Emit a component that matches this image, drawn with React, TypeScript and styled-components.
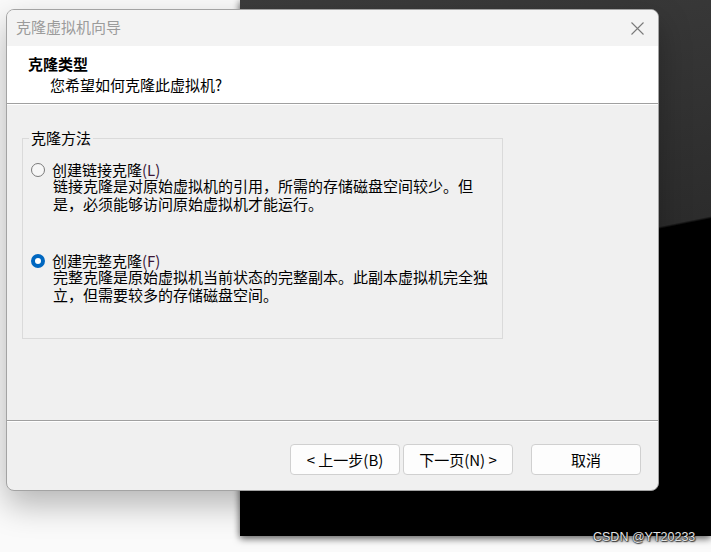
import React from "react";
import styled, { createGlobalStyle } from "styled-components";

const GlobalStyle = createGlobalStyle`
  html, body {
    margin: 0;
    padding: 0;
    background: #ffffff;
    overflow: hidden;
  }
  body {
    font-family: "Noto Sans CJK SC", "Noto Sans", sans-serif;
    font-size: 15px;
    color: #000;
  }
`;

const Desktop = styled.div`
  position: relative;
  width: 711px;
  height: 552px;
  background: #fafafa;
  overflow: hidden;
`;

const BackWindow = styled.div`
  position: absolute;
  left: 240px;
  top: 0;
  width: 471px;
  height: 536px;
  background: linear-gradient(
    168.6deg,
    #3c3c3c 0%,
    #2c2c2c 49.3%,
    #000000 49.7%,
    #000000 100%
  );
  box-shadow: 0 3px 7px rgba(0, 0, 0, 0.55), -2px 0 6px rgba(0, 0, 0, 0.12);
`;

const Dialog = styled.div`
  position: absolute;
  left: 6px;
  top: 9px;
  width: 653px;
  height: 482px;
  box-sizing: border-box;
  border: 1px solid #a3a3a3;
  border-radius: 8px;
  overflow: hidden;
  display: flex;
  flex-direction: column;
  background: #f0f0f0;
  box-shadow: 0 14px 32px rgba(0, 0, 0, 0.28);
`;

const TitleBar = styled.div`
  height: 36px;
  flex: none;
  box-sizing: border-box;
  display: flex;
  align-items: center;
  justify-content: space-between;
  padding: 0 14px 3px 9px;
  background: #f3f3f3;
`;

const TitleText = styled.span`
  color: #9b9b9b;
  font-size: 15px;
  line-height: 18px;
`;

const CloseButton = styled.span`
  width: 14px;
  height: 14px;
  display: flex;
  align-items: center;
  justify-content: center;
  margin-top: 3px;
`;

const Header = styled.div`
  height: 58px;
  flex: none;
  background: #ffffff;
  box-sizing: border-box;
  padding: 8px 0 0 21px;
  border-bottom: 1px solid #a0a0a0;
  box-shadow: 0 1px 0 #ffffff;
`;

const HeaderTitle = styled.div`
  font-weight: 700;
  font-size: 15px;
  line-height: 20px;
`;

const HeaderSub = styled.div`
  font-size: 15px;
  line-height: 20px;
  padding-left: 22px;
  margin-top: 1px;
`;

const Body = styled.div`
  flex: 1;
  padding: 24px 0 0 15px;
  margin-top: 1px;
`;

const GroupBox = styled.fieldset`
  width: 481px;
  height: 210px;
  box-sizing: border-box;
  margin: 0;
  padding: 0;
  border: 1px solid #dadada;
  border-radius: 0;
`;

const GroupLegend = styled.legend`
  margin-left: 6px;
  padding: 0 2px;
  font-size: 15px;
  line-height: 18px;
`;

const OptionList = styled.div`
  display: flex;
  flex-direction: column;
  gap: 39px;
  padding: 14px 0 0 8px;
`;

const Option = styled.div`
  display: grid;
  grid-template-columns: 14px auto;
  column-gap: 7px;
  align-items: center;
`;

const RadioCircle = styled.span<{ $checked?: boolean }>`
  width: 14px;
  height: 14px;
  box-sizing: border-box;
  border-radius: 50%;
  border: ${(p) => (p.$checked ? "4px solid #0067c0" : "1px solid #7a7a7a")};
  background: ${(p) => (p.$checked ? "#ffffff" : "#f6f6f6")};
`;

const OptionLabel = styled.span`
  font-size: 15px;
  line-height: 18px;
`;

const Mnemonic = styled.span`
  color: #3a1838;
`;

const OptionDesc = styled.div`
  grid-column: 2;
  width: 440px;
  margin-left: 1px;
  margin-top: -2px;
  font-size: 15px;
  line-height: 18px;
  line-break: strict;
`;

const Footer = styled.div`
  height: 70px;
  flex: none;
  box-sizing: border-box;
  border-top: 1px solid #a0a0a0;
  box-shadow: inset 0 1px 0 #ffffff;
  display: flex;
  justify-content: flex-end;
  align-items: flex-start;
  padding: 23px 17px 0 0;
`;

const ButtonGroup = styled.div`
  display: flex;
  gap: 3px;
  margin-right: 18px;
`;

const Button = styled.button`
  width: 110px;
  height: 31px;
  box-sizing: border-box;
  border: 1px solid #d0d0d0;
  border-radius: 4px;
  background: #fdfdfd;
  font-family: "Noto Sans CJK SC", "Noto Sans", sans-serif;
  font-size: 15px;
  line-height: 18px;
  color: #000;
  padding: 0;
`;

const Watermark = styled.span`
  position: absolute;
  left: 593px;
  top: 530px;
  font-family: "Liberation Sans", Arial, sans-serif;
  font-size: 12.5px;
  line-height: 15px;
  color: #e4e4e4;
  text-shadow: 0 0 1px #000, 0 0 2px #000, 1px 1px 1px rgba(0, 0, 0, 0.6);
`;

const CloseIcon = () => (
  <svg width="13" height="13" viewBox="0 0 13 13">
    <path d="M0.5 0.5 L12.5 12.5 M12.5 0.5 L0.5 12.5" stroke="#7a7a7a" strokeWidth="1.1" fill="none" />
  </svg>
);

export default function App() {
  return (
    <>
      <GlobalStyle />
      <Desktop>
        <BackWindow />
        <Dialog>
          <TitleBar>
            <TitleText>克隆虚拟机向导</TitleText>
            <CloseButton>
              <CloseIcon />
            </CloseButton>
          </TitleBar>
          <Header>
            <HeaderTitle>克隆类型</HeaderTitle>
            <HeaderSub>您希望如何克隆此虚拟机?</HeaderSub>
          </Header>
          <Body>
            <GroupBox>
              <GroupLegend>克隆方法</GroupLegend>
              <OptionList>
                <Option>
                  <RadioCircle />
                  <OptionLabel>
                    创建链接克隆<Mnemonic>(L)</Mnemonic>
                  </OptionLabel>
                  <OptionDesc>
                    链接克隆是对原始虚拟机的引用，所需的存储磁盘空间较少。但是，必须能够访问原始虚拟机才能运行。
                  </OptionDesc>
                </Option>
                <Option>
                  <RadioCircle $checked />
                  <OptionLabel>
                    创建完整克隆<Mnemonic>(F)</Mnemonic>
                  </OptionLabel>
                  <OptionDesc>
                    完整克隆是原始虚拟机当前状态的完整副本。此副本虚拟机完全独立，但需要较多的存储磁盘空间。
                  </OptionDesc>
                </Option>
              </OptionList>
            </GroupBox>
          </Body>
          <Footer>
            <ButtonGroup>
              <Button>&lt; 上一步(B)</Button>
              <Button>下一页(N) &gt;</Button>
            </ButtonGroup>
            <Button>取消</Button>
          </Footer>
        </Dialog>
        <Watermark>CSDN @YT20233</Watermark>
      </Desktop>
    </>
  );
}
